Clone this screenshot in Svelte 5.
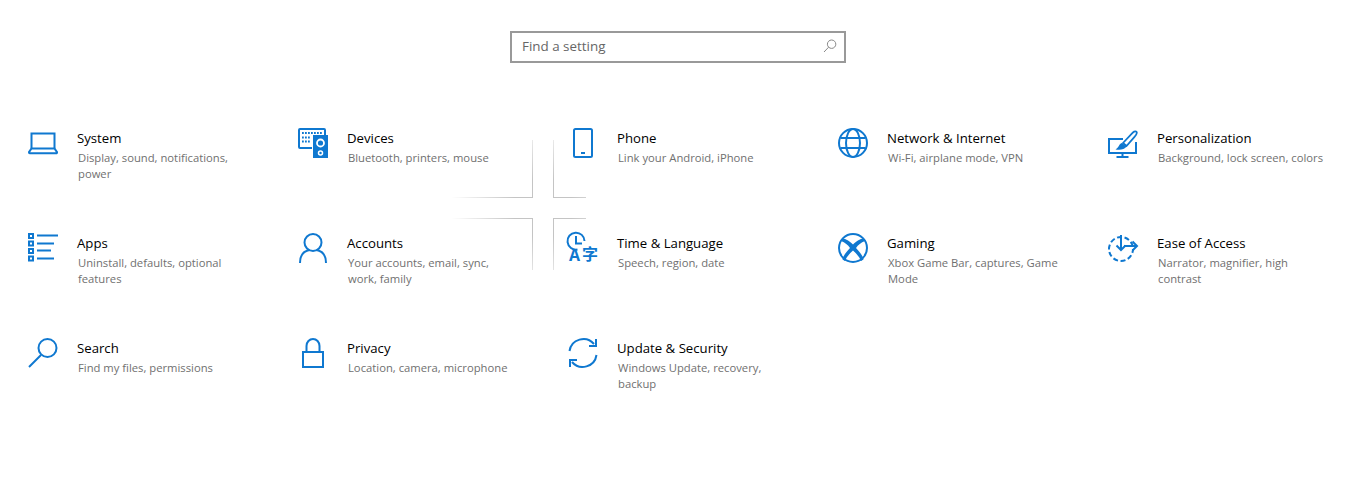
<script>
  // settings tiles, in reading order
  const tiles = [
    { id: 'system', title: 'System', desc: 'Display, sound, notifications, power' },
    { id: 'devices', title: 'Devices', desc: 'Bluetooth, printers, mouse' },
    { id: 'phone', title: 'Phone', desc: 'Link your Android, iPhone' },
    { id: 'network', title: 'Network & Internet', desc: 'Wi-Fi, airplane mode, VPN' },
    { id: 'personal', title: 'Personalization', desc: 'Background, lock screen, colors' },
    { id: 'apps', title: 'Apps', desc: 'Uninstall, defaults, optional features' },
    { id: 'accounts', title: 'Accounts', desc: 'Your accounts, email, sync, work, family' },
    { id: 'time', title: 'Time & Language', desc: 'Speech, region, date' },
    { id: 'gaming', title: 'Gaming', desc: 'Xbox Game Bar, captures, Game Mode' },
    { id: 'ease', title: 'Ease of Access', desc: 'Narrator, magnifier, high contrast' },
    { id: 'search', title: 'Search', desc: 'Find my files, permissions' },
    { id: 'privacy', title: 'Privacy', desc: 'Location, camera, microphone' },
    { id: 'update', title: 'Update & Security', desc: 'Windows Update, recovery, backup' }
  ];
</script>

<div class="page">
  <div class="search-row">
    <div class="search">
      <span>Find a setting</span>
      <svg viewBox="0 0 14 14" width="14" height="14" fill="none" stroke="#888" stroke-width="1">
        <circle cx="8.6" cy="5.2" r="4.2"></circle>
        <line x1="5.6" y1="8.2" x2="1" y2="13"></line>
      </svg>
    </div>
  </div>

  <div class="grid">
    {#each tiles as t}
      <div class="tile">
        <svg class="icon" viewBox="0 0 30 30" width="30" height="30" fill="none" stroke="#0f78d0" stroke-width="2">
          {#if t.id === 'system'}
            <path d="M3.500 20.500V5.500h23v15"></path>
            <path d="M3.500 20.500h23l2.500 3.600v.4a.7.7 0 0 1-.7.7H1.700a.7.7 0 0 1-.7-.7v-.4z"></path>
          {:else if t.id === 'devices'}
            <path d="M14 20H2a1 1 0 0 1-1-1V2a1 1 0 0 1 1-1h24a1 1 0 0 1 1 1v5"></path>
            <path stroke-width="1.800" stroke-dasharray="1.800 1.200" d="M4 5h21M4 9.500h9M4 13.500h9"></path>
            <rect x="15" y="7" width="15" height="23" fill="#0f78d0" stroke="none"></rect>
            <circle cx="22.500" cy="15" r="3.500" stroke="#fff" stroke-width="1.800"></circle>
            <circle cx="22.500" cy="25" r="2" stroke="#fff" stroke-width="1.500"></circle>
          {:else if t.id === 'phone'}
            <rect x="6" y="1" width="18" height="28" rx="1.500"></rect>
            <line x1="13" y1="25" x2="17" y2="25"></line>
          {:else if t.id === 'network'}
            <circle cx="15" cy="15" r="14"></circle>
            <ellipse cx="15" cy="15" rx="7" ry="14"></ellipse>
            <path d="M2.500 10h25M2.500 20h25"></path>
          {:else if t.id === 'personal'}
            <path d="M15 11H1v14h27V14"></path>
            <path d="M14.500 25v4M8.500 29h12"></path>
            <path stroke-width="1.800" d="M15 15 25 4.500c1.500-1.500 4-1.500 3.800.5-.2 1.500-1 2.500-2.300 3.800L18.500 18z"></path>
            <path fill="#0f78d0" stroke="none" d="M14 15c-3 .5-2.500 4-6.500 6.500 4 .6 9 .5 11-3z"></path>
          {:else if t.id === 'apps'}
            <g>
              <rect x="1" y="1" width="4" height="4"></rect>
              <rect x="1" y="8.500" width="4" height="4"></rect>
              <rect x="1" y="16" width="4" height="4"></rect>
              <rect x="1" y="23.500" width="4" height="4"></rect>
            </g>
            <path d="M9 2.500h21M9 10.500h17M9 17.500h14M9 25.500h17"></path>
          {:else if t.id === 'accounts'}
            <circle cx="15" cy="9.500" r="8.500"></circle>
            <path d="M2 30c0-8 4-12 9.500-13M28 30c0-8-4-12-9.500-13"></path>
          {:else if t.id === 'time'}
            <path d="M9.500 16.500a8.500 8.500 0 1 1 7-8.500"></path>
            <path d="M8 3v7.500h6"></path>
            <text class="glyph-a" x="1" y="28">A</text>
            <text class="glyph-zi" x="14" y="27">字</text>
          {:else if t.id === 'gaming'}
            <circle cx="15" cy="15" r="14"></circle>
            <path fill="#0f78d0" stroke="none" d="M4 5.500C8 5.500 12.500 9 15 11.500 17.500 9 22 5.500 26 5.500L27 8C23 9.500 20 12 18 15c3.500 3.500 7 8 7.500 11.500L23 28C21.500 24 18 20 15 17.500 12 20 8.500 24 7 28L4.500 26.500C5 23 8.500 18.500 12 15 10 12 7 9.500 3 8z"></path>
          {:else if t.id === 'ease'}
            <circle cx="13" cy="16" r="12" stroke-dasharray="5 2.600" stroke-dashoffset="1"></circle>
            <path d="M13 2v15M8.500 12.500l4.500 4.500 4.500-4.500"></path>
            <path d="M16 13h13M24.500 8.500l4.500 4.500-4.500 4.500"></path>
          {:else if t.id === 'search'}
            <circle cx="19.500" cy="10" r="9"></circle>
            <line x1="1" y1="29" x2="13" y2="17"></line>
          {:else if t.id === 'privacy'}
            <rect x="5" y="14" width="20" height="15"></rect>
            <path d="M8.500 14V8a6.500 7 0 0 1 13 0V14"></path>
          {:else if t.id === 'update'}
            <path d="M1.500 13A14 14 0 0 1 26 6"></path>
            <path d="M28.500 17A14 14 0 0 1 4 24"></path>
            <path d="M28 1v7h-7M2 29v-7h7"></path>
          {/if}
        </svg>
        <div class="text">
          <div class="title">{t.title}</div>
          <div class="desc">{t.desc}</div>
        </div>
      </div>
    {/each}
  </div>

  <!-- reveal highlight where four tile corners meet -->
  <div class="reveal"></div>
</div>

<style>
  :global(body) {
    margin: 0;
    background: #fff;
  }

  .page {
    position: relative;
    height: 478px;
    overflow: hidden;
    font-family: "Open Sans", "Noto Sans", sans-serif;
  }

  .search-row {
    display: flex;
    justify-content: center;
    padding: 31px 5px 0 0;
  }

  .search {
    display: flex;
    align-items: center;
    justify-content: space-between;
    box-sizing: border-box;
    width: 336px;
    height: 32px;
    padding: 0 7px 3px 10px;
    border: 2px solid #999;
    font-size: 13.4px;
    color: #666;
  }

  .grid {
    display: grid;
    grid-template-columns: repeat(5, 270px);
    grid-auto-rows: 105px;
    padding: 65px 0 0 28px;
  }

  .tile {
    display: flex;
    gap: 19px;
  }

  .icon {
    flex: none;
    overflow: visible;
  }

  .glyph-a {
    font-size: 16px;
    font-weight: 700;
    fill: #0f78d0;
    stroke: none;
  }

  .glyph-zi {
    font-family: "Noto Sans CJK SC", sans-serif;
    font-size: 16px;
    font-weight: 700;
    fill: #0f78d0;
    stroke: none;
  }

  .text {
    width: 172px;
  }

  .title {
    font-size: 13.2px;
    line-height: 20px;
    color: #000;
  }

  .desc {
    margin-top: 2px;
    padding-left: 1px;
    font-size: 11.25px;
    line-height: 16px;
    color: #707070;
  }

  .reveal {
    position: absolute;
    left: 450px;
    top: 140px;
    width: 136px;
    height: 130px;
    background:
      linear-gradient(#c4c4c4, #c4c4c4) 82px 0 / 1px 58px no-repeat,
      linear-gradient(#c4c4c4, #c4c4c4) 0 57px / 83px 1px no-repeat,
      linear-gradient(#c4c4c4, #c4c4c4) 103px 0 / 1px 58px no-repeat,
      linear-gradient(#c4c4c4, #c4c4c4) 103px 57px / 33px 1px no-repeat,
      linear-gradient(#c4c4c4, #c4c4c4) 82px 78px / 1px 52px no-repeat,
      linear-gradient(#c4c4c4, #c4c4c4) 0 78px / 83px 1px no-repeat,
      linear-gradient(#c4c4c4, #c4c4c4) 103px 78px / 1px 52px no-repeat,
      linear-gradient(#c4c4c4, #c4c4c4) 103px 78px / 33px 1px no-repeat;
    -webkit-mask-image: radial-gradient(circle at 93px 68px, #000 30px, transparent 92px);
    mask-image: radial-gradient(circle at 93px 68px, #000 30px, transparent 92px);
  }
</style>
